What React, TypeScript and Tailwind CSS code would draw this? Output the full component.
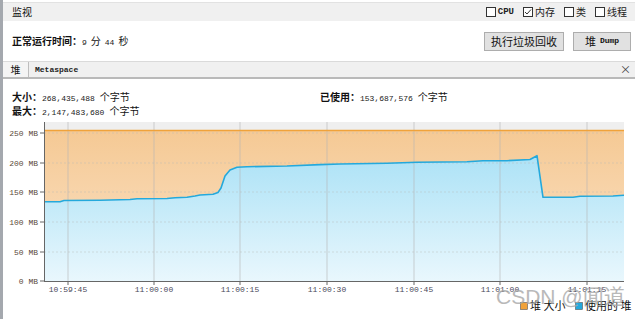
const cjk = '"Noto Sans CJK SC", "Liberation Sans", sans-serif';
const mono = '"Liberation Mono", "DejaVu Sans Mono", monospace';

const used: [number, number][] = [
  [44, 201.7], [60, 201.7], [64, 200.5], [100, 200.3], [130, 199.5], [137, 198.7],
  [167, 198.5], [175, 197.8], [187, 197.3], [195, 196], [200, 195], [213, 194.3],
  [218, 192.5], [221, 188], [225, 176], [230, 170], [237, 167.3], [247, 166.7],
  [287, 166], [320, 164.6], [340, 164], [387, 163.3], [417, 162.3], [467, 161.7],
  [483, 160.7], [507, 160.7], [530, 159.5], [537, 155.7], [543, 197.3], [573, 197.3],
  [580, 196.2], [613, 196], [624, 195.2],
];

const yTicks = [
  { y: 133, t: '250 MB' },
  { y: 163, t: '200 MB' },
  { y: 192, t: '150 MB' },
  { y: 222, t: '100 MB' },
  { y: 252, t: '50 MB' },
  { y: 281, t: '0 MB' },
];

const xTicks = [
  { x: 68, t: '10:59:45' },
  { x: 154, t: '11:00:00' },
  { x: 240, t: '11:00:15' },
  { x: 327, t: '11:00:30' },
  { x: 414, t: '11:00:45' },
  { x: 500, t: '11:01:00' },
  { x: 587, t: '11:01:15' },
];

function Check({ on, label, isMono }: { on?: boolean; label: string; isMono?: boolean }) {
  return (
    <label className="flex items-center gap-[2px] leading-none">
      <span className="w-[10px] h-[10px] border border-[#333] bg-white flex items-center justify-center">
        {on && (
          <svg width="8" height="8" viewBox="0 0 8 8">
            <path d="M1 4 L3 6 L7 1.5" fill="none" stroke="#333" strokeWidth="1" />
          </svg>
        )}
      </span>
      <span
        className={isMono ? 'text-[9px] font-bold text-[#222] leading-none mt-[1px]' : 'text-[10px] text-[#222] leading-none'}
        style={{ fontFamily: isMono ? mono : cjk }}
      >
        {label}
      </span>
    </label>
  );
}

function Num({ v }: { v: string }) {
  return (
    <span className="text-[8px] text-[#222]" style={{ fontFamily: mono }}>
      {v}
    </span>
  );
}

function Chart() {
  const line = used.map(([x, y], i) => `${i ? 'L' : 'M'}${x} ${y}`).join(' ');
  const area = `${line} L624 281 L44 281 Z`;
  return (
    <svg width="637" height="201" viewBox="3 118 637 201" className="block">
      <defs>
        <linearGradient id="orange" x1="0" y1="0" x2="0" y2="1">
          <stop offset="0" stopColor="#f5c994" />
          <stop offset="1" stopColor="#fbe3c8" />
        </linearGradient>
        <linearGradient id="blue" x1="0" y1="0" x2="0" y2="1">
          <stop offset="0" stopColor="#ace2f6" />
          <stop offset="1" stopColor="#e9f7fd" />
        </linearGradient>
      </defs>
      <rect x="44" y="122" width="580" height="9" fill="#efefef" />
      <rect x="44" y="130" width="580" height="151" fill="url(#orange)" />
      <path d={area} fill="url(#blue)" />
      {yTicks.slice(0, 5).map((t) => (
        <line key={t.t} x1="44" x2="624" y1={t.y} y2={t.y} stroke="#b8b8b8" strokeWidth="0.6" strokeDasharray="2 2" opacity="0.7" />
      ))}
      {xTicks.map((t) => (
        <line key={t.t} x1={t.x} x2={t.x} y1="122" y2="281" stroke="#b5b5b5" strokeWidth="1" opacity="0.6" />
      ))}
      <line x1="44" x2="624" y1="130.5" y2="130.5" stroke="#f0a23a" strokeWidth="1.6" />
      <path d={line} fill="none" stroke="#24a9dc" strokeWidth="1.6" strokeLinejoin="round" />
      <line x1="44.5" x2="44.5" y1="122" y2="282" stroke="#666" strokeWidth="1" />
      <line x1="44" x2="624" y1="281.5" y2="281.5" stroke="#666" strokeWidth="1" />
      {yTicks.map((t) => (
        <g key={t.t}>
          <line x1="40" x2="44" y1={t.y} y2={t.y} stroke="#666" />
          <text x="38" y={t.y + 3} textAnchor="end" fontSize="8" fill="#5a4a3a" fontFamily={mono}>
            {t.t}
          </text>
        </g>
      ))}
      {xTicks.map((t) => (
        <g key={t.t}>
          <line x1={t.x} x2={t.x} y1="281" y2="285" stroke="#666" />
          <text x={t.x} y="292" textAnchor="middle" fontSize="8" fill="#4a4a5a" fontFamily={mono}>
            {t.t}
          </text>
        </g>
      ))}
      <rect x="520.5" y="302.5" width="7" height="7" fill="#f0a23a" stroke="#555" strokeWidth="0.6" />
      <text x="530" y="310" fontSize="11" fill="#111" fontFamily={cjk}>堆 大小</text>
      <rect x="575.5" y="302.5" width="7" height="7" fill="#24a9dc" stroke="#555" strokeWidth="0.6" />
      <text x="585" y="310" fontSize="11" fill="#111" fontFamily={cjk}>使用的 堆</text>
    </svg>
  );
}

export default function App() {
  return (
    <div className="w-[640px] h-[319px] flex bg-white overflow-hidden relative" style={{ fontFamily: cjk }}>
      <div className="w-[3px] bg-[#a4a8ae] shrink-0" />
      <div className="flex-1 flex flex-col">
        <div className="mt-[2px] mr-[5px] h-[19px] bg-[#f0f0f0] border-t border-[#e2e2e2] flex items-center justify-between pl-[9px] pr-[8px]">
          <span className="text-[10px] text-[#111] leading-none">监视</span>
          <div className="flex items-center gap-[9px]">
            <Check label="CPU" isMono />
            <Check on label="内存" />
            <Check label="类" />
            <Check label="线程" />
          </div>
        </div>

        <div className="h-[40px] flex items-center justify-between pl-[9px] pr-[9px]">
          <div className="flex items-baseline text-[10px] text-[#111]">
            <span className="font-bold">正常运行时间：</span>
            <Num v="9" />
            <span className="ml-[4px]">分</span>
            <span className="ml-[4px]"><Num v="44" /></span>
            <span className="ml-[4px]">秒</span>
          </div>
          <div className="flex gap-[9px]">
            <button className="w-[80px] h-[19px] bg-[#e1e1e1] border border-[#adadad] text-[11px] text-[#111] leading-none">
              执行垃圾回收
            </button>
            <button className="w-[58px] h-[19px] bg-[#e1e1e1] border border-[#adadad] text-[11px] text-[#111] leading-none flex items-center justify-center gap-[4px]">
              <span>堆</span>
              <span className="text-[8px] font-bold" style={{ fontFamily: mono }}>Dump</span>
            </button>
          </div>
        </div>

        <div className="mr-[5px] h-[18px] bg-[#f0f0f0] border-t border-[#dadada] border-b-2 border-b-[#b9b9b9] flex items-stretch">
          <div className="w-[26px] bg-[#f4f4f4] border-r border-[#bdbdbd] flex items-center justify-center text-[10px] text-[#111]">
            堆
          </div>
          <div className="flex items-center pl-[6px] text-[8px] font-bold text-[#222]" style={{ fontFamily: mono }}>
            Metaspace
          </div>
          <div className="ml-auto pr-[4px] flex items-center text-[11px] text-[#444]">×</div>
        </div>

        <div className="h-[39px] pt-[11px] pl-[9px] flex text-[10px] text-[#111] leading-[14px]">
          <div className="w-[308px]">
            <div className="flex items-baseline h-[14px]">
              <span className="font-bold">大小：</span>
              <Num v="268,435,488" />
              <span className="ml-[5px]">个字节</span>
            </div>
            <div className="flex items-baseline h-[14px]">
              <span className="font-bold">最大：</span>
              <Num v="2,147,483,680" />
              <span className="ml-[5px]">个字节</span>
            </div>
          </div>
          <div className="flex items-baseline h-[14px]">
            <span className="font-bold">已使用：</span>
            <Num v="153,687,576" />
            <span className="ml-[5px]">个字节</span>
          </div>
        </div>

        <Chart />
      </div>
      <span className="absolute left-[496px] top-[286px] text-[21px] text-[#a8a8a8] opacity-80 leading-none pointer-events-none" style={{ fontFamily: '"Liberation Sans", "Noto Sans CJK SC", sans-serif' }}>
        CSDN @闻道
      </span>
    </div>
  );
}
